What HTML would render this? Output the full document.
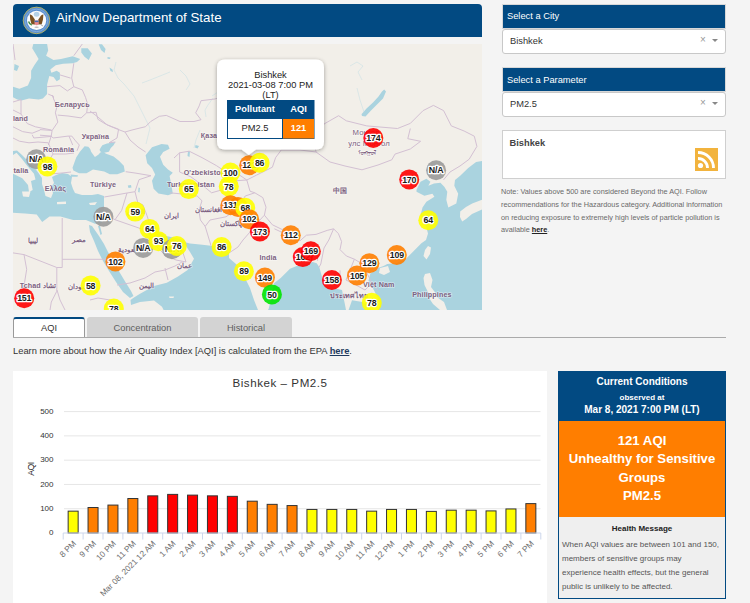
<!DOCTYPE html>
<html><head><meta charset="utf-8">
<style>
*{box-sizing:border-box;margin:0;padding:0}
html,body{width:750px;height:603px;overflow:hidden;background:#f4f4f4;font-family:"Liberation Sans",sans-serif;color:#333}
.a{position:absolute}
.hdr{left:13px;top:4px;width:469px;height:33px;background:#024a82;border-radius:4px 4px 0 0}
.title{left:56px;top:11px;font-size:13.3px;color:#fff;white-space:nowrap;line-height:14px}
.map{left:13px;top:44px;width:469px;height:266px;overflow:hidden;background:#f2efe9}
.ph{background:#024a82;color:#fff;font-size:9.3px;line-height:11px;border:1px solid #d8d8d8;white-space:nowrap}
.sel{background:#fff;border:1px solid #c8c8c8;border-radius:3px;font-size:9.3px;line-height:11px;color:#333}
.note{left:501px;top:186px;width:226px;font-size:7.3px;line-height:12.8px;color:#6a6a6a}
.tab{top:317px;height:20px;border-radius:3px 3px 0 0;font-size:9.3px;text-align:center;line-height:23px;color:#5e5e5e;background:#d3d3d3}
.chart{left:13px;top:371px;width:534px;height:232px;background:#fff}
.cc{left:558px;top:371px;width:168px;height:228px;border:1px solid #024a82;background:#efefef}
</style></head><body>

<!-- header -->
<div class="a hdr"></div>
<svg class="a" style="left:22px;top:6px" width="29" height="29" viewBox="22 6 29 29">
  <circle cx="36.5" cy="20.4" r="13.3" fill="#5a8fcf" stroke="#bdb65c" stroke-width="0.9"/>
  <circle cx="36.5" cy="20.4" r="11.3" fill="none" stroke="#8fb5e0" stroke-width="1" opacity="0.7"/>
  <circle cx="36.6" cy="20.4" r="9.6" fill="#fbfbfb"/>
  <ellipse cx="36.6" cy="14.3" rx="2.8" ry="2.5" fill="#b5d2e8"/>
  <path d="M29.8 14.2 L32.2 15.5 L34.8 19.5 L35 24.5 L31.5 24.2 L30.2 19.5 Z" fill="#7a5122"/>
  <path d="M43.4 14.2 L41 15.5 L38.4 19.5 L38.2 24.5 L41.7 24.2 L43 19.5 Z" fill="#7a5122"/>
  <path d="M34.6 20.6 H38.6 V24.2 Q36.6 26.3 34.6 24.2 Z" fill="#e7868c"/>
  <rect x="34.6" y="20.6" width="4" height="1.5" fill="#3f6ab0"/>
  <path d="M28.6 21.5 Q29.5 24.5 31.8 25.2" stroke="#3f8a45" stroke-width="1.4" fill="none"/>
  <path d="M40.5 24.5 L43 26" stroke="#9a9a9a" stroke-width="0.8"/>
  <ellipse cx="36.6" cy="27.2" rx="2.2" ry="0.8" fill="#bbb"/>
</svg>
<div class="a title">AirNow Department of State</div>

<!-- map -->
<div class="a map" id="map"><svg width="469" height="266" viewBox="13 44 469 266" style="display:block" font-family="Liberation Sans, sans-serif">
<defs><filter id="sh" x="-20%" y="-20%" width="140%" height="150%"><feGaussianBlur in="SourceAlpha" stdDeviation="2"/><feOffset dy="1"/><feComponentTransfer><feFuncA type="linear" slope="0.35"/></feComponentTransfer><feMerge><feMergeNode/><feMergeNode in="SourceGraphic"/></feMerge></filter></defs>
<rect x="13" y="44" width="469" height="266" fill="#f2efe9"/>
<path d="M33.3,44.0 L47.1,44.0 L48.2,50.4 L46.1,55.7 L53.5,60.0 L61.0,58.9 L72.7,56.3 L80.2,58.9 L77.0,62.1 L72.7,63.2 L63.1,63.7 L55.7,65.3 L50.3,69.6 L51.4,72.8 L56.7,70.7 L59.9,72.8 L59.9,79.2 L56.7,81.3 L53.5,77.1 L49.3,76.0 L47.1,84.5 L47.1,94.1 L42.9,98.4 L38.6,99.5 L29.0,98.4 L21.5,100.5 L17.3,99.5 L13.0,97.3 L13.0,86.7 L19.4,88.8 L27.9,85.6 L31.1,78.1 L31.1,70.7 L34.3,65.3 L38.6,58.9 L35.4,53.6 L32.2,48.3 Z M81.3,48.3 L87.7,48.3 L91.9,53.6 L88.7,60.0 L84.5,56.8 L81.3,52.5 Z M98.7,44.3 L102.0,44.3 L105.6,49.0 L104.5,53.0 L101.0,50.0 Z M72.5,167.7 L76.2,157.4 L79.9,151.8 L84.6,146.2 L88.3,146.7 L90.2,149.0 L91.1,151.8 L94.9,156.9 L98.6,154.6 L100.5,152.3 L101.4,152.7 L104.2,152.7 L106.1,153.7 L113.6,156.5 L119.2,161.1 L123.8,165.8 L124.8,171.4 L117.3,174.2 L109.8,174.2 L104.2,171.4 L93.0,169.5 L86.5,173.3 L79.0,173.3 L73.4,170.5 Z M100.5,148.0 L102.3,145.3 L107.0,143.4 L115.4,142.0 L113.6,145.3 L110.8,148.0 L108.9,151.8 L104.2,152.7 L101.4,152.7 L99.5,149.9 Z M70.6,174.6 L78.0,175.3 L77.5,176.8 L71.0,176.5 Z M13.0,151.0 L17.0,150.5 L22.0,155.0 L28.0,161.0 L34.0,167.0 L38.5,173.0 L42.0,178.0 L42.0,184.0 L44.0,190.0 L45.5,196.0 L51.0,198.0 L53.0,193.0 L51.0,187.0 L54.0,183.0 L52.0,177.0 L56.0,175.0 L62.0,173.0 L68.0,174.0 L72.0,177.0 L71.0,183.0 L73.0,189.0 L75.0,193.0 L82.0,195.0 L92.0,195.0 L98.0,194.0 L104.0,196.0 L104.0,208.0 L103.0,216.0 L102.4,222.0 L100.5,223.7 L95.0,223.7 L86.0,220.0 L73.2,220.0 L60.4,216.4 L49.5,216.4 L42.2,221.9 L36.7,214.6 L25.0,213.5 L13.0,212.8 Z M145.6,155.2 L152.0,147.2 L161.6,144.0 L168.0,144.8 L169.6,148.8 L163.2,152.0 L160.0,156.8 L163.2,164.8 L168.0,169.6 L172.8,172.8 L169.6,176.0 L171.2,184.0 L172.8,193.6 L168.0,195.2 L158.4,193.6 L153.6,188.8 L152.0,180.8 L155.2,174.4 L152.0,168.0 L147.2,163.2 Z M89.0,225.0 L92.0,226.0 L99.0,236.0 L104.0,244.0 L108.0,252.0 L114.0,262.0 L120.0,273.0 L126.0,283.0 L131.0,291.0 L133.5,296.0 L130.0,298.0 L123.0,292.0 L116.0,282.0 L109.0,271.0 L103.0,261.0 L98.0,251.0 L94.0,241.0 L90.0,232.0 Z M98.0,226.0 L100.0,226.0 L102.0,234.0 L100.5,235.0 Z M149.0,227.0 L156.0,231.0 L166.0,236.0 L176.0,238.0 L184.0,240.0 L186.0,244.0 L180.0,246.0 L172.0,244.0 L164.0,242.0 L156.0,240.0 L150.0,236.0 L146.0,231.0 Z M133.2,298.0 L139.6,294.0 L154.0,286.0 L166.8,282.8 L178.0,276.4 L187.6,270.0 L194.0,258.8 L190.0,252.0 L186.0,246.0 L184.0,242.0 L190.0,243.5 L200.0,244.5 L211.0,245.7 L222.0,248.0 L229.0,253.0 L229.0,258.0 L236.0,264.0 L244.0,276.0 L250.0,288.0 L254.0,300.0 L258.0,310.0 L268.0,310.0 L268.7,308.7 L272.0,295.0 L274.0,283.3 L280.7,278.0 L290.0,268.7 L296.7,266.0 L303.3,264.7 L312.7,262.0 L316.7,263.3 L319.3,267.3 L322.0,276.7 L324.7,284.7 L330.0,288.7 L336.7,288.7 L342.0,290.0 L343.3,296.7 L344.7,303.3 L346.0,310.0 L163.6,310.0 L162.0,306.8 L154.0,300.4 L140.0,302.0 L131.0,305.0 L130.5,300.0 Z M348.6,310.0 L352.0,300.3 L362.5,302.0 L367.6,305.5 L371.0,310.0 Z M377.9,310.0 L379.8,305.8 L377.9,298.2 L374.1,290.6 L368.4,281.1 L370.3,273.6 L377.9,267.9 L383.6,266.0 L387.3,264.1 L396.8,263.1 L406.3,258.4 L412.0,252.7 L421.4,243.3 L426.0,240.0 L428.0,233.5 L426.0,226.0 L424.4,223.5 L420.5,215.6 L422.5,207.6 L426.4,201.7 L434.4,196.7 L432.4,193.7 L424.4,195.7 L416.5,191.7 L416.5,189.7 L420.5,181.8 L426.4,178.8 L430.4,181.8 L428.4,185.7 L434.0,183.5 L440.4,182.8 L444.3,186.7 L447.3,191.7 L446.3,199.7 L448.3,207.6 L456.3,203.6 L458.2,193.7 L454.3,185.7 L455.0,180.0 L460.2,175.8 L468.2,167.9 L476.1,161.9 L482.0,160.9 L482.0,310.0 Z M384.2,89.5 L386.0,91.5 L383.0,98.5 L377.0,104.5 L371.0,110.5 L365.5,116.5 L362.0,116.0 L361.5,114.2 L366.5,108.5 L373.0,102.5 L378.5,96.5 L382.0,91.5 Z M107.5,57.0 L110.5,57.5 L110.0,59.0 L107.5,58.8 Z M109.5,67.5 L112.5,69.5 L113.0,72.0 L110.5,71.0 Z M14.5,64.0 L19.0,66.0 L17.0,71.0 L14.0,70.0 Z M127.8,185.5 L131.0,185.0 L131.5,187.5 L128.5,188.0 Z M138.5,187.5 L140.0,188.0 L139.5,192.5 L138.2,192.0 Z M188.0,151.0 L190.0,151.5 L189.5,157.0 L187.5,156.0 Z M195.5,145.0 L199.0,146.0 L197.5,148.5 L195.0,147.5 Z" fill="#aad3df"/>
<path d="M13.0,155.0 L16.5,152.8 L22.0,159.0 L27.0,165.5 L34.0,173.7 L35.5,179.5 L31.0,181.0 L32.7,190.0 L29.0,192.0 L28.0,185.0 L22.3,178.3 L13.0,173.7 Z M22.0,191.5 L30.5,191.5 L29.0,197.0 L23.0,196.5 Z M57.0,202.0 L66.0,201.5 L66.0,204.0 L57.0,204.2 Z M89.0,203.0 L97.0,202.0 L95.0,205.0 L90.0,205.0 Z M169.0,296.5 L174.0,296.5 L173.5,298.0 L169.5,298.0 Z M460.2,211.6 L466.0,207.0 L472.2,203.6 L482.0,199.7 L482.0,209.6 L472.0,214.0 L466.0,219.0 L462.2,221.5 L460.0,217.0 Z M428.0,246.0 L431.0,247.5 L430.0,254.0 L426.5,259.5 L423.5,256.0 L425.0,250.0 Z M380.0,268.0 L388.0,266.0 L390.0,272.0 L384.0,275.0 L379.0,273.0 Z M425.0,274.0 L430.0,273.0 L432.5,280.0 L431.0,287.0 L434.0,291.0 L437.0,295.0 L433.0,297.0 L428.0,292.0 L424.5,285.0 L423.5,278.0 Z M429.0,298.0 L436.0,296.5 L444.0,302.0 L447.0,310.0 L440.0,310.0 L433.0,304.0 Z" fill="#f2efe9"/>
<path d="M116.0,62.0 L114.0,70.0 L118.0,78.0 L124.0,84.0 L134.0,96.0 L140.0,108.0 L150.0,128.0 L146.0,144.0 M142.0,83.0 L150.0,80.0 L160.0,76.0 L170.0,72.0 M180.0,70.0 L186.0,76.0 L190.0,84.0 L186.0,90.0 M213.0,98.0 L208.0,105.0 L205.0,110.0 L206.0,117.0 M200.0,130.0 L196.0,140.0 L194.0,148.0 M350.0,66.0 L357.0,62.0 L363.0,66.0 L358.0,72.0 L362.0,80.0 M357.0,88.0 L360.0,100.0 L364.0,112.0 M225.0,85.0 L218.0,92.0 L212.0,96.0" fill="none" stroke="#aad3df" stroke-width="0.6" opacity="0.55"/>
<path d="M90.0,111.0 L97.0,116.3 L107.3,125.0 L117.7,129.3 L125.0,132.0 L132.0,130.0 L140.0,128.0 L145.5,126.7 L150.7,121.5 L159.3,116.3 L166.3,115.4 L180.0,121.5 L194.0,121.5 L201.0,119.7 L195.7,112.8 L199.2,105.9 L201.0,100.7 L214.8,99.0 L218.0,98.0 M125.0,132.0 L130.0,140.0 L138.0,147.0 L145.6,152.0 M324.0,124.0 L338.6,115.7 L346.3,120.8 L366.8,125.9 L397.5,128.5 L410.3,123.4 L423.1,110.6 L433.4,105.4 L443.6,110.6 L451.3,125.9 L464.1,131.0 L474.3,136.2 L476.9,146.4 L469.2,159.2 L460.0,166.0 L450.0,172.0 L443.5,179.9 M324.0,124.0 L314.0,140.0 L316.0,152.0 L330.0,162.0 L345.0,166.0 L362.0,169.8 L378.0,165.0 L391.8,159.8 L395.0,154.1 L410.3,149.0 L420.6,141.3 L407.8,138.7 L410.3,128.5 M316.0,152.0 L300.0,150.0 L281.0,150.0 L280.4,151.2 L275.6,157.6 L272.4,167.2 L256.4,175.2 L246.8,180.0 L250.0,191.2 L254.8,192.8 L262.8,197.6 L266.0,207.2 L264.4,215.2 L272.4,224.8 L284.0,230.4 L300.0,240.8 L306.4,235.2 L316.0,234.4 L327.2,230.4 L333.6,228.8 L338.4,233.6 L341.6,241.6 L340.0,249.6 L346.4,256.0 L354.4,259.2 L362.4,264.0 L368.8,268.8 L377.9,269.0 M174.0,158.0 L179.6,152.8 L189.2,151.2 L202.0,157.6 L216.4,165.6 L221.2,168.8 L235.0,172.0 L246.8,180.0 M179.6,152.8 L179.6,172.0 L190.8,176.8 L202.0,184.8 L211.6,192.8 L222.8,189.6 L222.8,181.6 L246.8,180.0 M170.0,192.8 L186.0,194.4 L197.2,196.0 L202.0,200.8 L198.8,210.4 L200.4,220.0 L205.2,226.4 L211.0,245.7 M205.2,226.4 L210.0,220.0 L226.0,216.8 L237.2,208.8 L245.2,196.0 L254.8,192.8 M264.4,215.2 L258.0,222.0 L250.0,232.0 L243.0,240.0 L238.0,247.0 L229.0,253.0 M274.4,228.8 L300.0,240.8 M304.8,244.8 L311.2,241.6 L317.6,248.0 L317.6,260.8 M333.6,228.8 L328.8,240.0 L324.0,248.0 L322.4,256.0 L320.8,264.0 L319.0,267.3 M340.0,270.4 L340.0,283.2 M354.4,259.2 L350.0,270.0 L346.0,280.0 L356.0,285.0 L365.0,290.0 L372.0,283.2 M362.4,264.0 L372.0,283.2 L378.0,290.0 M104.3,197.0 L127.0,193.0 L135.0,191.7 L137.7,202.3 L143.0,205.0 L147.0,215.7 L149.7,223.7 L157.7,229.0 M127.0,193.0 L121.7,210.3 L115.0,219.7 L141.7,229.0 L149.0,227.0 M135.0,191.7 L139.0,179.7 L151.0,175.7 M125.7,171.7 L135.0,173.0 L151.0,175.7 M104.0,214.0 L115.0,219.7 M141.7,229.0 L150.0,240.0 L165.0,255.0 L176.0,260.0 L186.0,262.0 M117.0,285.0 L130.0,283.0 L145.0,278.0 L155.0,272.0 L165.0,270.0 L175.0,266.0 L182.0,262.0 M168.0,280.0 L165.0,268.0 M176.0,246.0 L182.0,250.0 L186.0,262.0 M62.2,218.0 L62.2,267.5 L56.8,267.5 L56.8,291.2 L51.3,302.0 L50.0,310.0 M62.2,259.3 L106.0,259.3 M13.0,252.9 L24.0,254.6 L56.8,267.5 M24.0,254.6 L26.7,269.3 L24.0,285.8 L20.0,300.0 M57.0,290.0 L60.0,300.0 L65.0,310.0 M90.0,300.0 L98.0,298.0 L110.0,300.0 L118.0,304.0 M52.1,95.0 L54.0,99.7 L56.8,107.1 L55.4,112.8 L57.8,122.1 L52.1,130.5 L51.2,136.1 L48.4,145.0 M57.8,115.1 L68.0,116.0 L81.1,117.9 L86.7,112.8 L96.1,112.3 L97.9,119.3 L105.4,124.0 L112.2,126.8 L118.6,129.2 L117.0,138.0 L109.0,142.8 L115.4,142.0 M40.0,129.6 L52.1,130.5 M40.0,135.2 L51.2,136.1 L53.1,138.0 L68.0,136.1 L71.8,136.1 L75.5,140.8 L79.3,145.0 L77.0,150.8 M69.0,136.1 L72.7,145.0 M21.0,99.6 L21.0,114.0 L27.4,123.6 L35.4,126.8 L51.4,130.0 M13.0,126.8 L22.6,131.6 L32.2,133.2 L40.2,130.0 M32.2,134.8 L33.8,138.0 L51.4,136.4 M13.0,138.0 L19.4,141.2 L29.0,142.8 L38.0,142.0 L48.2,142.8 M48.2,142.8 L53.0,154.0 L65.8,154.0 L74.0,153.0 M53.0,154.0 L48.0,162.0 L46.0,170.0 L50.0,174.0 L62.0,173.0 L71.0,172.0 M13.0,110.0 L21.0,114.0 M47.1,86.7 L59.9,85.6 L67.4,90.9 L73.8,86.7 L82.3,89.9 L85.5,97.3 L87.7,104.3 L86.7,112.8 M73.8,63.2 L71.7,78.1 L73.8,86.7 M59.9,74.9 L70.6,78.1 M48.2,94.1 L53.5,96.3 L53.5,99.5 M82.3,44.0 L73.8,55.7 M13.0,44.0 L15.0,60.0 M13.0,102.0 L21.0,99.6" fill="none" stroke="#d3c0d3" stroke-width="1" stroke-linejoin="round"/>
<text x="72.2" y="106.6" text-anchor="middle" font-size="7.18" font-weight="700" fill="#7d6281" letter-spacing="0.1" stroke="#fff" stroke-width="1.6" stroke-opacity="0.45" stroke-linejoin="round" paint-order="stroke">Беларусь</text>
<text x="20.5" y="121.1" text-anchor="middle" font-size="7.18" font-weight="700" fill="#7d6281" letter-spacing="0.1" stroke="#fff" stroke-width="1.6" stroke-opacity="0.45" stroke-linejoin="round" paint-order="stroke">land</text>
<text x="95.4" y="138.6" text-anchor="middle" font-size="7.18" font-weight="700" fill="#7d6281" letter-spacing="0.1" stroke="#fff" stroke-width="1.6" stroke-opacity="0.45" stroke-linejoin="round" paint-order="stroke">Україна</text>
<text x="58.6" y="152.2" text-anchor="middle" font-size="7.18" font-weight="700" fill="#7d6281" letter-spacing="0.1" stroke="#fff" stroke-width="1.6" stroke-opacity="0.45" stroke-linejoin="round" paint-order="stroke">România</text>
<text x="21" y="173.1" text-anchor="middle" font-size="7.18" font-weight="700" fill="#7d6281" letter-spacing="0.1" stroke="#fff" stroke-width="1.6" stroke-opacity="0.45" stroke-linejoin="round" paint-order="stroke">talia</text>
<text x="55.4" y="191.4" text-anchor="middle" font-size="7.18" font-weight="700" fill="#7d6281" letter-spacing="0.1" stroke="#fff" stroke-width="1.6" stroke-opacity="0.45" stroke-linejoin="round" paint-order="stroke">Ελλάς</text>
<text x="103" y="186.9" text-anchor="middle" font-size="7.18" font-weight="700" fill="#7d6281" letter-spacing="0.1" stroke="#fff" stroke-width="1.6" stroke-opacity="0.45" stroke-linejoin="round" paint-order="stroke">Türkiye</text>
<text x="209" y="138.1" text-anchor="middle" font-size="7.18" font-weight="700" fill="#7d6281" letter-spacing="0.1" stroke="#fff" stroke-width="1.6" stroke-opacity="0.45" stroke-linejoin="round" paint-order="stroke">Қаза</text>
<text x="204.4" y="175.4" text-anchor="middle" font-size="7.18" font-weight="700" fill="#7d6281" letter-spacing="0.1" stroke="#fff" stroke-width="1.6" stroke-opacity="0.45" stroke-linejoin="round" paint-order="stroke">O'zbekiston</text>
<text x="190.8" y="187.4" text-anchor="middle" font-size="7.18" font-weight="700" fill="#7d6281" letter-spacing="0.1" stroke="#fff" stroke-width="1.6" stroke-opacity="0.45" stroke-linejoin="round" paint-order="stroke">Turkmenistan</text>
<text x="171" y="217.6" text-anchor="middle" font-size="7.18" font-weight="700" fill="#7d6281" letter-spacing="0.1" stroke="#fff" stroke-width="1.6" stroke-opacity="0.45" stroke-linejoin="round" paint-order="stroke">ایران</text>
<text x="79.4" y="241.79999999999998" text-anchor="middle" font-size="7.18" font-weight="700" fill="#7d6281" letter-spacing="0.1" stroke="#fff" stroke-width="1.6" stroke-opacity="0.45" stroke-linejoin="round" paint-order="stroke">مصر</text>
<text x="33" y="243.4" text-anchor="middle" font-size="7.18" font-weight="700" fill="#7d6281" letter-spacing="0.1" stroke="#fff" stroke-width="1.6" stroke-opacity="0.45" stroke-linejoin="round" paint-order="stroke">ليبيا</text>
<text x="184" y="268.0" text-anchor="middle" font-size="7.18" font-weight="700" fill="#7d6281" letter-spacing="0.1" stroke="#fff" stroke-width="1.6" stroke-opacity="0.45" stroke-linejoin="round" paint-order="stroke">عمان</text>
<text x="146.4" y="288.0" text-anchor="middle" font-size="7.18" font-weight="700" fill="#7d6281" letter-spacing="0.1" stroke="#fff" stroke-width="1.6" stroke-opacity="0.45" stroke-linejoin="round" paint-order="stroke">اليمن</text>
<text x="37.8" y="288.0" text-anchor="middle" font-size="7.18" font-weight="700" fill="#7d6281" letter-spacing="0.1" stroke="#fff" stroke-width="1.6" stroke-opacity="0.45" stroke-linejoin="round" paint-order="stroke">Tchad تشاد</text>
<text x="80" y="288.6" text-anchor="middle" font-size="7.18" font-weight="700" fill="#7d6281" letter-spacing="0.1" stroke="#fff" stroke-width="1.6" stroke-opacity="0.45" stroke-linejoin="round" paint-order="stroke">السودان</text>
<text x="268" y="260.40000000000003" text-anchor="middle" font-size="7.18" font-weight="700" fill="#7d6281" letter-spacing="0.1" stroke="#fff" stroke-width="1.6" stroke-opacity="0.45" stroke-linejoin="round" paint-order="stroke">India</text>
<text x="340.4" y="193.4" text-anchor="middle" font-size="7.18" font-weight="700" fill="#7d6281" letter-spacing="0.1" stroke="#fff" stroke-width="1.6" stroke-opacity="0.45" stroke-linejoin="round" paint-order="stroke">中国</text>
<text x="366" y="135.4" text-anchor="middle" font-size="7.73" font-weight="400" fill="#7d6281" letter-spacing="0.1" stroke="#fff" stroke-width="1.6" stroke-opacity="0.45" stroke-linejoin="round" paint-order="stroke">Монгол</text>
<text x="369" y="145.79999999999998" text-anchor="middle" font-size="7.73" font-weight="400" fill="#7d6281" letter-spacing="0.1" stroke="#fff" stroke-width="1.6" stroke-opacity="0.45" stroke-linejoin="round" paint-order="stroke">улс Монгол</text>
<text x="367" y="154.9" text-anchor="middle" font-size="6.44" font-weight="400" fill="#7d6281" letter-spacing="0.1" stroke="#fff" stroke-width="1.6" stroke-opacity="0.45" stroke-linejoin="round" paint-order="stroke">ᠮᠣᠩᠭᠣᠯ</text>
<text x="378.8" y="287.0" text-anchor="middle" font-size="7.18" font-weight="700" fill="#7d6281" letter-spacing="0.1" stroke="#fff" stroke-width="1.6" stroke-opacity="0.45" stroke-linejoin="round" paint-order="stroke">Việt Nam</text>
<text x="431.9" y="296.8" text-anchor="middle" font-size="7.18" font-weight="700" fill="#7d6281" letter-spacing="0.1" stroke="#fff" stroke-width="1.6" stroke-opacity="0.45" stroke-linejoin="round" paint-order="stroke">Philippines</text>
<text x="349" y="298.1" text-anchor="middle" font-size="7.18" font-weight="700" fill="#7d6281" letter-spacing="0.1" stroke="#fff" stroke-width="1.6" stroke-opacity="0.45" stroke-linejoin="round" paint-order="stroke">ประเทศไทย</text>
<text x="230.8" y="225.79999999999998" text-anchor="middle" font-size="7.18" font-weight="700" fill="#7d6281" letter-spacing="0.1" stroke="#fff" stroke-width="1.6" stroke-opacity="0.45" stroke-linejoin="round" paint-order="stroke">پاکستان</text>
<text x="208.4" y="212.2" text-anchor="middle" font-size="7.18" font-weight="700" fill="#7d6281" letter-spacing="0.1" stroke="#fff" stroke-width="1.6" stroke-opacity="0.45" stroke-linejoin="round" paint-order="stroke">افغانستان</text>
<text x="131" y="252.0" text-anchor="middle" font-size="7.18" font-weight="700" fill="#7d6281" letter-spacing="0.1" stroke="#fff" stroke-width="1.6" stroke-opacity="0.45" stroke-linejoin="round" paint-order="stroke">السعودية</text>
<text x="136" y="213.6" text-anchor="middle" font-size="7.18" font-weight="700" fill="#7d6281" letter-spacing="0.1" stroke="#fff" stroke-width="1.6" stroke-opacity="0.45" stroke-linejoin="round" paint-order="stroke">العراق</text>
<circle cx="36.2" cy="159.2" r="10" fill="#9a9a9a" fill-opacity="0.9"/>
<text x="36.2" y="162.29999999999998" text-anchor="middle" font-size="8.8" font-weight="700" fill="#1a1a1a" stroke="#fff" stroke-width="2.6" stroke-linejoin="round" paint-order="stroke" letter-spacing="-0.2">N/A</text>
<circle cx="47.4" cy="166.4" r="10" fill="#ffff00" fill-opacity="0.9"/>
<text x="47.4" y="169.5" text-anchor="middle" font-size="8.8" font-weight="700" fill="#1a1a1a" stroke="#fff" stroke-width="2.6" stroke-linejoin="round" paint-order="stroke" letter-spacing="-0.2">98</text>
<circle cx="188.8" cy="189.1" r="10" fill="#ffff00" fill-opacity="0.9"/>
<text x="188.8" y="192.2" text-anchor="middle" font-size="8.8" font-weight="700" fill="#1a1a1a" stroke="#fff" stroke-width="2.6" stroke-linejoin="round" paint-order="stroke" letter-spacing="-0.2">65</text>
<circle cx="230.4" cy="172.5" r="10" fill="#ffff00" fill-opacity="0.9"/>
<text x="230.4" y="175.6" text-anchor="middle" font-size="8.8" font-weight="700" fill="#1a1a1a" stroke="#fff" stroke-width="2.6" stroke-linejoin="round" paint-order="stroke" letter-spacing="-0.2">100</text>
<circle cx="228.8" cy="186.4" r="10" fill="#ffff00" fill-opacity="0.9"/>
<text x="228.8" y="189.5" text-anchor="middle" font-size="8.8" font-weight="700" fill="#1a1a1a" stroke="#fff" stroke-width="2.6" stroke-linejoin="round" paint-order="stroke" letter-spacing="-0.2">78</text>
<circle cx="249.2" cy="165.2" r="10" fill="#ff7e00" fill-opacity="0.9"/>
<text x="249.2" y="168.29999999999998" text-anchor="middle" font-size="8.8" font-weight="700" fill="#1a1a1a" stroke="#fff" stroke-width="2.6" stroke-linejoin="round" paint-order="stroke" letter-spacing="-0.2">121</text>
<circle cx="259.6" cy="162.8" r="10" fill="#ffff00" fill-opacity="0.9"/>
<text x="259.6" y="165.9" text-anchor="middle" font-size="8.8" font-weight="700" fill="#1a1a1a" stroke="#fff" stroke-width="2.6" stroke-linejoin="round" paint-order="stroke" letter-spacing="-0.2">86</text>
<circle cx="238" cy="207" r="10" fill="#ff7e00" fill-opacity="0.9"/>
<text x="238" y="210.1" text-anchor="middle" font-size="8.8" font-weight="700" fill="#1a1a1a" stroke="#fff" stroke-width="2.6" stroke-linejoin="round" paint-order="stroke" letter-spacing="-0.2">108</text>
<circle cx="230.4" cy="205.2" r="10" fill="#ff7e00" fill-opacity="0.9"/>
<text x="230.4" y="208.29999999999998" text-anchor="middle" font-size="8.8" font-weight="700" fill="#1a1a1a" stroke="#fff" stroke-width="2.6" stroke-linejoin="round" paint-order="stroke" letter-spacing="-0.2">131</text>
<circle cx="245.2" cy="207.8" r="10" fill="#ffff00" fill-opacity="0.9"/>
<text x="245.2" y="210.9" text-anchor="middle" font-size="8.8" font-weight="700" fill="#1a1a1a" stroke="#fff" stroke-width="2.6" stroke-linejoin="round" paint-order="stroke" letter-spacing="-0.2">68</text>
<circle cx="249.2" cy="219.3" r="10" fill="#ff7e00" fill-opacity="0.9"/>
<text x="249.2" y="222.4" text-anchor="middle" font-size="8.8" font-weight="700" fill="#1a1a1a" stroke="#fff" stroke-width="2.6" stroke-linejoin="round" paint-order="stroke" letter-spacing="-0.2">102</text>
<circle cx="259.9" cy="231.5" r="10" fill="#ff0000" fill-opacity="0.9"/>
<text x="259.9" y="234.6" text-anchor="middle" font-size="8.8" font-weight="700" fill="#1a1a1a" stroke="#fff" stroke-width="2.6" stroke-linejoin="round" paint-order="stroke" letter-spacing="-0.2">173</text>
<circle cx="290.8" cy="235.2" r="10" fill="#ff7e00" fill-opacity="0.9"/>
<text x="290.8" y="238.29999999999998" text-anchor="middle" font-size="8.8" font-weight="700" fill="#1a1a1a" stroke="#fff" stroke-width="2.6" stroke-linejoin="round" paint-order="stroke" letter-spacing="-0.2">112</text>
<circle cx="302.8" cy="257.1" r="10" fill="#ff0000" fill-opacity="0.9"/>
<text x="302.8" y="260.20000000000005" text-anchor="middle" font-size="8.8" font-weight="700" fill="#1a1a1a" stroke="#fff" stroke-width="2.6" stroke-linejoin="round" paint-order="stroke" letter-spacing="-0.2">162</text>
<circle cx="310.8" cy="251.2" r="10" fill="#ff0000" fill-opacity="0.9"/>
<text x="310.8" y="254.29999999999998" text-anchor="middle" font-size="8.8" font-weight="700" fill="#1a1a1a" stroke="#fff" stroke-width="2.6" stroke-linejoin="round" paint-order="stroke" letter-spacing="-0.2">169</text>
<circle cx="243.9" cy="271.2" r="10" fill="#ffff00" fill-opacity="0.9"/>
<text x="243.9" y="274.3" text-anchor="middle" font-size="8.8" font-weight="700" fill="#1a1a1a" stroke="#fff" stroke-width="2.6" stroke-linejoin="round" paint-order="stroke" letter-spacing="-0.2">89</text>
<circle cx="264.9" cy="277.6" r="10" fill="#ff7e00" fill-opacity="0.9"/>
<text x="264.9" y="280.70000000000005" text-anchor="middle" font-size="8.8" font-weight="700" fill="#1a1a1a" stroke="#fff" stroke-width="2.6" stroke-linejoin="round" paint-order="stroke" letter-spacing="-0.2">149</text>
<circle cx="271.9" cy="294.4" r="10" fill="#00e400" fill-opacity="0.9"/>
<text x="271.9" y="297.5" text-anchor="middle" font-size="8.8" font-weight="700" fill="#1a1a1a" stroke="#fff" stroke-width="2.6" stroke-linejoin="round" paint-order="stroke" letter-spacing="-0.2">50</text>
<circle cx="331.9" cy="280" r="10" fill="#ff0000" fill-opacity="0.9"/>
<text x="331.9" y="283.1" text-anchor="middle" font-size="8.8" font-weight="700" fill="#1a1a1a" stroke="#fff" stroke-width="2.6" stroke-linejoin="round" paint-order="stroke" letter-spacing="-0.2">158</text>
<circle cx="357" cy="275.5" r="10" fill="#ff7e00" fill-opacity="0.9"/>
<text x="357" y="278.6" text-anchor="middle" font-size="8.8" font-weight="700" fill="#1a1a1a" stroke="#fff" stroke-width="2.6" stroke-linejoin="round" paint-order="stroke" letter-spacing="-0.2">105</text>
<circle cx="369.4" cy="263.2" r="10" fill="#ff7e00" fill-opacity="0.9"/>
<text x="369.4" y="266.3" text-anchor="middle" font-size="8.8" font-weight="700" fill="#1a1a1a" stroke="#fff" stroke-width="2.6" stroke-linejoin="round" paint-order="stroke" letter-spacing="-0.2">129</text>
<circle cx="396.8" cy="255" r="10" fill="#ff7e00" fill-opacity="0.9"/>
<text x="396.8" y="258.1" text-anchor="middle" font-size="8.8" font-weight="700" fill="#1a1a1a" stroke="#fff" stroke-width="2.6" stroke-linejoin="round" paint-order="stroke" letter-spacing="-0.2">109</text>
<circle cx="371.8" cy="302.8" r="10" fill="#ffff00" fill-opacity="0.9"/>
<text x="371.8" y="305.90000000000003" text-anchor="middle" font-size="8.8" font-weight="700" fill="#1a1a1a" stroke="#fff" stroke-width="2.6" stroke-linejoin="round" paint-order="stroke" letter-spacing="-0.2">78</text>
<circle cx="428.3" cy="220.3" r="10" fill="#ffff00" fill-opacity="0.9"/>
<text x="428.3" y="223.4" text-anchor="middle" font-size="8.8" font-weight="700" fill="#1a1a1a" stroke="#fff" stroke-width="2.6" stroke-linejoin="round" paint-order="stroke" letter-spacing="-0.2">64</text>
<circle cx="409.2" cy="179.4" r="10" fill="#ff0000" fill-opacity="0.9"/>
<text x="409.2" y="182.5" text-anchor="middle" font-size="8.8" font-weight="700" fill="#1a1a1a" stroke="#fff" stroke-width="2.6" stroke-linejoin="round" paint-order="stroke" letter-spacing="-0.2">170</text>
<circle cx="436.1" cy="170.3" r="10" fill="#9a9a9a" fill-opacity="0.9"/>
<text x="436.1" y="173.4" text-anchor="middle" font-size="8.8" font-weight="700" fill="#1a1a1a" stroke="#fff" stroke-width="2.6" stroke-linejoin="round" paint-order="stroke" letter-spacing="-0.2">N/A</text>
<circle cx="373.3" cy="138" r="10" fill="#ff0000" fill-opacity="0.9"/>
<text x="373.3" y="141.1" text-anchor="middle" font-size="8.8" font-weight="700" fill="#1a1a1a" stroke="#fff" stroke-width="2.6" stroke-linejoin="round" paint-order="stroke" letter-spacing="-0.2">174</text>
<circle cx="135.2" cy="211.6" r="10" fill="#ffff00" fill-opacity="0.9"/>
<text x="135.2" y="214.7" text-anchor="middle" font-size="8.8" font-weight="700" fill="#1a1a1a" stroke="#fff" stroke-width="2.6" stroke-linejoin="round" paint-order="stroke" letter-spacing="-0.2">59</text>
<circle cx="103.4" cy="216.8" r="10" fill="#9a9a9a" fill-opacity="0.9"/>
<text x="103.4" y="219.9" text-anchor="middle" font-size="8.8" font-weight="700" fill="#1a1a1a" stroke="#fff" stroke-width="2.6" stroke-linejoin="round" paint-order="stroke" letter-spacing="-0.2">N/A</text>
<circle cx="149.6" cy="228.9" r="10" fill="#ffff00" fill-opacity="0.9"/>
<text x="149.6" y="232.0" text-anchor="middle" font-size="8.8" font-weight="700" fill="#1a1a1a" stroke="#fff" stroke-width="2.6" stroke-linejoin="round" paint-order="stroke" letter-spacing="-0.2">64</text>
<circle cx="143.2" cy="247.9" r="10" fill="#9a9a9a" fill-opacity="0.9"/>
<text x="143.2" y="251.0" text-anchor="middle" font-size="8.8" font-weight="700" fill="#1a1a1a" stroke="#fff" stroke-width="2.6" stroke-linejoin="round" paint-order="stroke" letter-spacing="-0.2">N/A</text>
<circle cx="158.4" cy="241.2" r="10" fill="#ffff00" fill-opacity="0.9"/>
<text x="158.4" y="244.29999999999998" text-anchor="middle" font-size="8.8" font-weight="700" fill="#1a1a1a" stroke="#fff" stroke-width="2.6" stroke-linejoin="round" paint-order="stroke" letter-spacing="-0.2">93</text>
<circle cx="172" cy="249.2" r="10" fill="#9a9a9a" fill-opacity="0.9"/>
<text x="172" y="252.29999999999998" text-anchor="middle" font-size="8.8" font-weight="700" fill="#1a1a1a" stroke="#fff" stroke-width="2.6" stroke-linejoin="round" paint-order="stroke" letter-spacing="-0.2">N/A</text>
<circle cx="176.8" cy="246" r="10" fill="#ffff00" fill-opacity="0.9"/>
<text x="176.8" y="249.1" text-anchor="middle" font-size="8.8" font-weight="700" fill="#1a1a1a" stroke="#fff" stroke-width="2.6" stroke-linejoin="round" paint-order="stroke" letter-spacing="-0.2">76</text>
<circle cx="221.6" cy="247.1" r="10" fill="#ffff00" fill-opacity="0.9"/>
<text x="221.6" y="250.2" text-anchor="middle" font-size="8.8" font-weight="700" fill="#1a1a1a" stroke="#fff" stroke-width="2.6" stroke-linejoin="round" paint-order="stroke" letter-spacing="-0.2">86</text>
<circle cx="115.4" cy="261.4" r="10" fill="#ff7e00" fill-opacity="0.9"/>
<text x="115.4" y="264.5" text-anchor="middle" font-size="8.8" font-weight="700" fill="#1a1a1a" stroke="#fff" stroke-width="2.6" stroke-linejoin="round" paint-order="stroke" letter-spacing="-0.2">102</text>
<circle cx="90.6" cy="285.4" r="10" fill="#ffff00" fill-opacity="0.9"/>
<text x="90.6" y="288.5" text-anchor="middle" font-size="8.8" font-weight="700" fill="#1a1a1a" stroke="#fff" stroke-width="2.6" stroke-linejoin="round" paint-order="stroke" letter-spacing="-0.2">58</text>
<circle cx="24.2" cy="298.2" r="10" fill="#ff0000" fill-opacity="0.9"/>
<text x="24.2" y="301.3" text-anchor="middle" font-size="8.8" font-weight="700" fill="#1a1a1a" stroke="#fff" stroke-width="2.6" stroke-linejoin="round" paint-order="stroke" letter-spacing="-0.2">151</text>
<circle cx="113.8" cy="308.6" r="10" fill="#ffff00" fill-opacity="0.9"/>
<text x="113.8" y="311.70000000000005" text-anchor="middle" font-size="8.8" font-weight="700" fill="#1a1a1a" stroke="#fff" stroke-width="2.6" stroke-linejoin="round" paint-order="stroke" letter-spacing="-0.2">78</text>
<g filter="url(#sh)"><path d="M225,59.5 H316 Q324,59.5 324,67.5 V141.5 Q324,149.5 316,149.5 H256 L248.8,155 L241.5,149.5 H225 Q217,149.5 217,141.5 V67.5 Q217,59.5 225,59.5 Z" fill="#fff"/></g>
<text x="270.5" y="77.9" text-anchor="middle" font-size="9.3" fill="#222">Bishkek</text>
<text x="270.5" y="87.8" text-anchor="middle" font-size="9.3" fill="#222">2021-03-08 7:00 PM</text>
<text x="270.5" y="97.8" text-anchor="middle" font-size="9.3" fill="#222">(LT)</text>
<rect x="227.5" y="100.5" width="86.5" height="38" fill="#fff" stroke="#024a82" stroke-width="1"/>
<rect x="227.5" y="100.5" width="86.5" height="18.5" fill="#024a82"/>
<rect x="283" y="119" width="31" height="19.5" fill="#ff7e00"/>
<rect x="282" y="119" width="1" height="19.5" fill="#024a82"/>
<text x="255" y="111.7" text-anchor="middle" font-size="9.3" font-weight="700" fill="#fff">Pollutant</text>
<text x="298.5" y="111.7" text-anchor="middle" font-size="9.3" font-weight="700" fill="#fff">AQI</text>
<text x="255" y="131" text-anchor="middle" font-size="9.3" fill="#222">PM2.5</text>
<text x="298.5" y="131" text-anchor="middle" font-size="9.3" font-weight="700" fill="#fff">121</text>
</svg></div>

<!-- right column -->
<div class="a ph" style="left:502px;top:4px;width:224px;height:25px;padding:6px 0 0 4px">Select a City</div>
<div class="a sel" style="left:502px;top:29px;width:224px;height:25px;padding:6px 0 0 7px">Bishkek</div>
<div class="a" style="left:700px;top:34px;font-size:10px;color:#999;line-height:11px">×</div>
<div class="a" style="left:712px;top:39px;width:0;height:0;border-left:3px solid transparent;border-right:3px solid transparent;border-top:3.5px solid #888"></div>

<div class="a ph" style="left:502px;top:67px;width:224px;height:25px;padding:7px 0 0 4px">Select a Parameter</div>
<div class="a sel" style="left:502px;top:92px;width:224px;height:25px;padding:6px 0 0 7px">PM2.5</div>
<div class="a" style="left:700px;top:97px;font-size:10px;color:#999;line-height:11px">×</div>
<div class="a" style="left:712px;top:102px;width:0;height:0;border-left:3px solid transparent;border-right:3px solid transparent;border-top:3.5px solid #888"></div>

<div class="a" style="left:502px;top:130px;width:224px;height:49px;background:#fff;border:1px solid #cfcfcf"></div>
<div class="a" style="left:509.5px;top:138px;font-size:9.3px;font-weight:700;color:#444;line-height:11px">Bishkek</div>
<svg class="a" style="left:695px;top:148px" width="23" height="23" viewBox="0 0 23 23">
  <rect width="23" height="23" fill="#f2b33d"/>
  <circle cx="5.5" cy="17.5" r="2.6" fill="#fff"/>
  <path d="M3 10.5 A9.5 9.5 0 0 1 12.5 20" stroke="#fff" stroke-width="2.8" fill="none"/>
  <path d="M3 4.5 A15.5 15.5 0 0 1 18.5 20" stroke="#fff" stroke-width="2.8" fill="none"/>
</svg>
<div class="a note">Note: Values above 500 are considered Beyond the AQI. Follow recommendations for the Hazardous category. Additional information on reducing exposure to extremely high levels of particle pollution is available <b style="color:#222;text-decoration:underline">here</b>.</div>

<!-- tabs -->
<div class="a" style="left:13px;top:336.5px;width:713px;height:1.5px;background:#aaa"></div>
<div class="a tab" style="left:13px;width:72px;background:#fff;border:1px solid #999;border-top:2px solid #024a82;border-bottom:none;color:#333;line-height:19px;height:19.5px">AQI</div>
<div class="a tab" style="left:87px;width:111px">Concentration</div>
<div class="a tab" style="left:200px;width:92px">Historical</div>
<div class="a" style="left:13px;top:345.7px;font-size:9.33px;color:#333;white-space:nowrap;line-height:11px">Learn more about how the Air Quality Index [AQI] is calculated from the EPA <b style="text-decoration:underline;color:#1e3a5f">here</b>.</div>

<!-- chart -->
<div class="a chart"></div>
<svg class="a" style="left:0;top:0" width="750" height="603" viewBox="0 0 750 603" font-family="Liberation Sans, sans-serif">
<text x="280" y="386.7" text-anchor="middle" font-size="11.6" fill="#333" letter-spacing="0.55">Bishkek – PM2.5</text>
<rect x="64" y="508.22" width="476.5" height="1" fill="#e6e6e6"/>
<text x="53.5" y="511.02" text-anchor="end" font-size="8" fill="#333">100</text>
<rect x="64" y="483.94" width="476.5" height="1" fill="#e6e6e6"/>
<text x="53.5" y="486.74" text-anchor="end" font-size="8" fill="#333">200</text>
<rect x="64" y="459.66" width="476.5" height="1" fill="#e6e6e6"/>
<text x="53.5" y="462.46" text-anchor="end" font-size="8" fill="#333">300</text>
<rect x="64" y="435.38" width="476.5" height="1" fill="#e6e6e6"/>
<text x="53.5" y="438.18" text-anchor="end" font-size="8" fill="#333">400</text>
<rect x="64" y="411.10" width="476.5" height="1" fill="#e6e6e6"/>
<text x="53.5" y="413.90" text-anchor="end" font-size="8" fill="#333">500</text>
<text x="53.5" y="535.30" text-anchor="end" font-size="8" fill="#333">0</text>
<text transform="translate(33.6 469) rotate(-90)" text-anchor="middle" font-size="8.6" fill="#222" letter-spacing="-0.4">AQI</text>
<rect x="68.15" y="511.15" width="10" height="21.85" fill="#ffff00" stroke="#333" stroke-width="1"/>
<rect x="88.05" y="507.51" width="10" height="25.49" fill="#ff7e00" stroke="#333" stroke-width="1"/>
<rect x="107.95" y="505.08" width="10" height="27.92" fill="#ff7e00" stroke="#333" stroke-width="1"/>
<rect x="127.85" y="498.52" width="10" height="34.48" fill="#ff7e00" stroke="#333" stroke-width="1"/>
<rect x="147.75" y="495.85" width="10" height="37.15" fill="#ff0000" stroke="#333" stroke-width="1"/>
<rect x="167.65" y="494.39" width="10" height="38.61" fill="#ff0000" stroke="#333" stroke-width="1"/>
<rect x="187.55" y="495.12" width="10" height="37.88" fill="#ff0000" stroke="#333" stroke-width="1"/>
<rect x="207.45" y="495.85" width="10" height="37.15" fill="#ff0000" stroke="#333" stroke-width="1"/>
<rect x="227.35" y="496.34" width="10" height="36.66" fill="#ff0000" stroke="#333" stroke-width="1"/>
<rect x="247.25" y="501.19" width="10" height="31.81" fill="#ff7e00" stroke="#333" stroke-width="1"/>
<rect x="267.15" y="504.35" width="10" height="28.65" fill="#ff7e00" stroke="#333" stroke-width="1"/>
<rect x="287.05" y="505.56" width="10" height="27.44" fill="#ff7e00" stroke="#333" stroke-width="1"/>
<rect x="306.95" y="509.45" width="10" height="23.55" fill="#ffff00" stroke="#333" stroke-width="1"/>
<rect x="326.85" y="509.45" width="10" height="23.55" fill="#ffff00" stroke="#333" stroke-width="1"/>
<rect x="346.75" y="509.45" width="10" height="23.55" fill="#ffff00" stroke="#333" stroke-width="1"/>
<rect x="366.65" y="511.15" width="10" height="21.85" fill="#ffff00" stroke="#333" stroke-width="1"/>
<rect x="386.55" y="509.45" width="10" height="23.55" fill="#ffff00" stroke="#333" stroke-width="1"/>
<rect x="406.45" y="509.45" width="10" height="23.55" fill="#ffff00" stroke="#333" stroke-width="1"/>
<rect x="426.35" y="511.39" width="10" height="21.61" fill="#ffff00" stroke="#333" stroke-width="1"/>
<rect x="446.25" y="510.18" width="10" height="22.82" fill="#ffff00" stroke="#333" stroke-width="1"/>
<rect x="466.15" y="510.18" width="10" height="22.82" fill="#ffff00" stroke="#333" stroke-width="1"/>
<rect x="486.05" y="510.91" width="10" height="22.09" fill="#ffff00" stroke="#333" stroke-width="1"/>
<rect x="505.95" y="508.96" width="10" height="24.04" fill="#ffff00" stroke="#333" stroke-width="1"/>
<rect x="525.85" y="503.62" width="10" height="29.38" fill="#ff7e00" stroke="#333" stroke-width="1"/>
<rect x="63.20" y="532.50" width="477.60" height="1" fill="#ccd6eb"/>
<rect x="62.70" y="533.00" width="1" height="6.5" fill="#ccd6eb"/>
<rect x="82.60" y="533.00" width="1" height="6.5" fill="#ccd6eb"/>
<rect x="102.50" y="533.00" width="1" height="6.5" fill="#ccd6eb"/>
<rect x="122.40" y="533.00" width="1" height="6.5" fill="#ccd6eb"/>
<rect x="142.30" y="533.00" width="1" height="6.5" fill="#ccd6eb"/>
<rect x="162.20" y="533.00" width="1" height="6.5" fill="#ccd6eb"/>
<rect x="182.10" y="533.00" width="1" height="6.5" fill="#ccd6eb"/>
<rect x="202.00" y="533.00" width="1" height="6.5" fill="#ccd6eb"/>
<rect x="221.90" y="533.00" width="1" height="6.5" fill="#ccd6eb"/>
<rect x="241.80" y="533.00" width="1" height="6.5" fill="#ccd6eb"/>
<rect x="261.70" y="533.00" width="1" height="6.5" fill="#ccd6eb"/>
<rect x="281.60" y="533.00" width="1" height="6.5" fill="#ccd6eb"/>
<rect x="301.50" y="533.00" width="1" height="6.5" fill="#ccd6eb"/>
<rect x="321.40" y="533.00" width="1" height="6.5" fill="#ccd6eb"/>
<rect x="341.30" y="533.00" width="1" height="6.5" fill="#ccd6eb"/>
<rect x="361.20" y="533.00" width="1" height="6.5" fill="#ccd6eb"/>
<rect x="381.10" y="533.00" width="1" height="6.5" fill="#ccd6eb"/>
<rect x="401.00" y="533.00" width="1" height="6.5" fill="#ccd6eb"/>
<rect x="420.90" y="533.00" width="1" height="6.5" fill="#ccd6eb"/>
<rect x="440.80" y="533.00" width="1" height="6.5" fill="#ccd6eb"/>
<rect x="460.70" y="533.00" width="1" height="6.5" fill="#ccd6eb"/>
<rect x="480.60" y="533.00" width="1" height="6.5" fill="#ccd6eb"/>
<rect x="500.50" y="533.00" width="1" height="6.5" fill="#ccd6eb"/>
<rect x="520.40" y="533.00" width="1" height="6.5" fill="#ccd6eb"/>
<rect x="540.30" y="533.00" width="1" height="6.5" fill="#ccd6eb"/>
<text transform="translate(76.65 544) rotate(-45)" text-anchor="end" font-size="8.3" fill="#707070">8 PM</text>
<text transform="translate(96.55 544) rotate(-45)" text-anchor="end" font-size="8.3" fill="#707070">9 PM</text>
<text transform="translate(116.45 544) rotate(-45)" text-anchor="end" font-size="8.3" fill="#707070">10 PM</text>
<text transform="translate(136.35 544) rotate(-45)" text-anchor="end" font-size="8.3" fill="#707070">11 PM</text>
<text transform="translate(156.25 544) rotate(-45)" text-anchor="end" font-size="8.3" fill="#707070">Mar 08, 2021 12 AM</text>
<text transform="translate(176.15 544) rotate(-45)" text-anchor="end" font-size="8.3" fill="#707070">1 AM</text>
<text transform="translate(196.05 544) rotate(-45)" text-anchor="end" font-size="8.3" fill="#707070">2 AM</text>
<text transform="translate(215.95 544) rotate(-45)" text-anchor="end" font-size="8.3" fill="#707070">3 AM</text>
<text transform="translate(235.85 544) rotate(-45)" text-anchor="end" font-size="8.3" fill="#707070">4 AM</text>
<text transform="translate(255.75 544) rotate(-45)" text-anchor="end" font-size="8.3" fill="#707070">5 AM</text>
<text transform="translate(275.65 544) rotate(-45)" text-anchor="end" font-size="8.3" fill="#707070">6 AM</text>
<text transform="translate(295.55 544) rotate(-45)" text-anchor="end" font-size="8.3" fill="#707070">7 AM</text>
<text transform="translate(315.45 544) rotate(-45)" text-anchor="end" font-size="8.3" fill="#707070">8 AM</text>
<text transform="translate(335.35 544) rotate(-45)" text-anchor="end" font-size="8.3" fill="#707070">9 AM</text>
<text transform="translate(355.25 544) rotate(-45)" text-anchor="end" font-size="8.3" fill="#707070">10 AM</text>
<text transform="translate(375.15 544) rotate(-45)" text-anchor="end" font-size="8.3" fill="#707070">11 AM</text>
<text transform="translate(395.05 544) rotate(-45)" text-anchor="end" font-size="8.3" fill="#707070">12 PM</text>
<text transform="translate(414.95 544) rotate(-45)" text-anchor="end" font-size="8.3" fill="#707070">1 PM</text>
<text transform="translate(434.85 544) rotate(-45)" text-anchor="end" font-size="8.3" fill="#707070">2 PM</text>
<text transform="translate(454.75 544) rotate(-45)" text-anchor="end" font-size="8.3" fill="#707070">3 PM</text>
<text transform="translate(474.65 544) rotate(-45)" text-anchor="end" font-size="8.3" fill="#707070">4 PM</text>
<text transform="translate(494.55 544) rotate(-45)" text-anchor="end" font-size="8.3" fill="#707070">5 PM</text>
<text transform="translate(514.45 544) rotate(-45)" text-anchor="end" font-size="8.3" fill="#707070">6 PM</text>
<text transform="translate(534.35 544) rotate(-45)" text-anchor="end" font-size="8.3" fill="#707070">7 PM</text>
</svg>

<!-- current conditions -->
<div class="a cc"></div>
<div class="a" style="left:559px;top:372px;width:166px;height:49px;background:#024a82;color:#fff;text-align:center;font-weight:700">
  <div class="a" style="left:0;width:166px;top:3.5px;font-size:10px;line-height:11px">Current Conditions</div>
  <div class="a" style="left:0;width:166px;top:19.5px;font-size:8px;line-height:11px;">observed at</div>
  <div class="a" style="left:0;width:166px;top:31.5px;font-size:10px;line-height:11px;">Mar 8, 2021 7:00 PM (LT)</div>
</div>
<div class="a" style="left:559px;top:421px;width:166px;height:96px;background:#ff7e00;color:#fff;text-align:center;font-weight:700;font-size:13.2px;line-height:18.5px;padding-top:10.7px">121 AQI<br>Unhealthy for Sensitive<br>Groups<br>PM2.5</div>
<div class="a" style="left:559px;top:517px;width:166px;font-weight:700;font-size:8px;text-align:center;color:#222;line-height:11px;padding-top:6px">Health Message</div>
<div class="a" style="left:562px;top:537.5px;width:163px;font-size:8px;line-height:14px;color:#555;white-space:nowrap">When AQI values are between 101 and 150,<br>members of sensitive groups may<br>experience health effects, but the general<br>public is unlikely to be affected.</div>

</body></html>
